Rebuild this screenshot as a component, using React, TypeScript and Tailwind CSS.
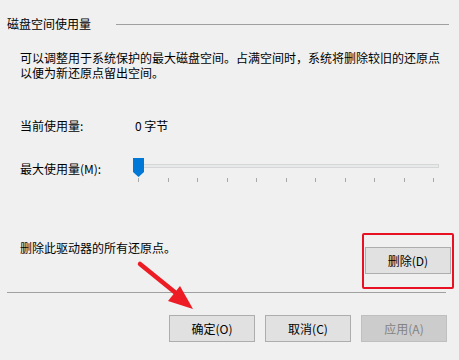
const ticks = Array.from({ length: 11 }, (_, i) => i)

function Button({ label, disabled }: { label: string; disabled?: boolean }) {
  return (
    <div
      className={
        "w-[86px] h-[27px] flex items-center justify-center border " +
        (disabled
          ? "bg-[#cccccc] border-[#bfbfbf] text-[#838383]"
          : "bg-[#e1e1e1] border-[#adadad] text-black")
      }
    >
      {label}
    </div>
  )
}

export default function App() {
  return (
    <div
      className="relative w-[459px] h-[360px] bg-[#f0f0f0] text-[12px] leading-[16px] text-black overflow-hidden"
      style={{ fontFamily: '"Noto Sans CJK SC", "Liberation Sans", sans-serif' }}
    >
      {/* Group header */}
      <div className="flex items-center pt-[16px] pl-[7px] pr-[10px]">
        <span>磁盘空间使用量</span>
        <div className="ml-[25px] flex-1 h-px bg-[#a0a0a0]" />
      </div>

      {/* Description */}
      <p className="mt-[18px] ml-[20px] w-[426px] leading-[15px]">
        可以调整用于系统保护的最大磁盘空间。占满空间时，系统将删除较旧的还原点以便为新还原点留出空间。
      </p>

      {/* Current usage */}
      <div className="mt-[38px] flex pl-[20px]">
        <span className="w-[115px]">当前使用量:</span>
        <span>0 字节</span>
      </div>

      {/* Max usage slider */}
      <div className="mt-[24px] flex pl-[20px]">
        <span className="w-[113px] mt-[3px]">最大使用量(M):</span>
        <div className="relative w-[306px] h-[23px]">
          <div className="ml-[6px] mt-[6px] h-[4px] bg-[#e7eaea] border border-[#d6d6d6]" />
          <div className="flex justify-between ml-[5px] mr-[5px] mt-[10px]">
            {ticks.map((t) => (
              <div key={t} className="w-px h-[4px] bg-[#a8a8a8]" />
            ))}
          </div>
          <svg className="absolute left-0 top-0" width="11" height="19" viewBox="0 0 11 19">
            <polygon points="0,0 11,0 11,14 5.5,19 0,14" fill="#0078d7" />
          </svg>
        </div>
      </div>

      {/* Delete row */}
      <div className="mt-[52px] flex justify-between pl-[20px] pr-[5px]">
        <span className="mt-[7px]">删除此驱动器的所有还原点。</span>
        <div className="w-[92px] h-[56px] border-2 border-[#e81123] rounded-[2px] pt-[12px] pl-[1px] pr-[2px]">
          <Button label="删除(D)" />
        </div>
      </div>

      {/* Separator */}
      <div className="mt-[3px] ml-[7px] w-[439px] h-px bg-[#a0a0a0]" />

      {/* Footer buttons */}
      <div className="mt-[22px] flex justify-end gap-[10px] pr-[12px]">
        <Button label="确定(O)" />
        <Button label="取消(C)" />
        <Button label="应用(A)" disabled />
      </div>

      {/* Red annotation arrow */}
      <svg className="absolute left-0 top-0 pointer-events-none" width="459" height="360">
        <line x1="140" y1="264" x2="182" y2="298" stroke="#ed1c24" strokeWidth="4.5" strokeLinecap="round" />
        <polygon points="193,309 168,301 180,286" fill="#ed1c24" />
      </svg>
    </div>
  )
}
